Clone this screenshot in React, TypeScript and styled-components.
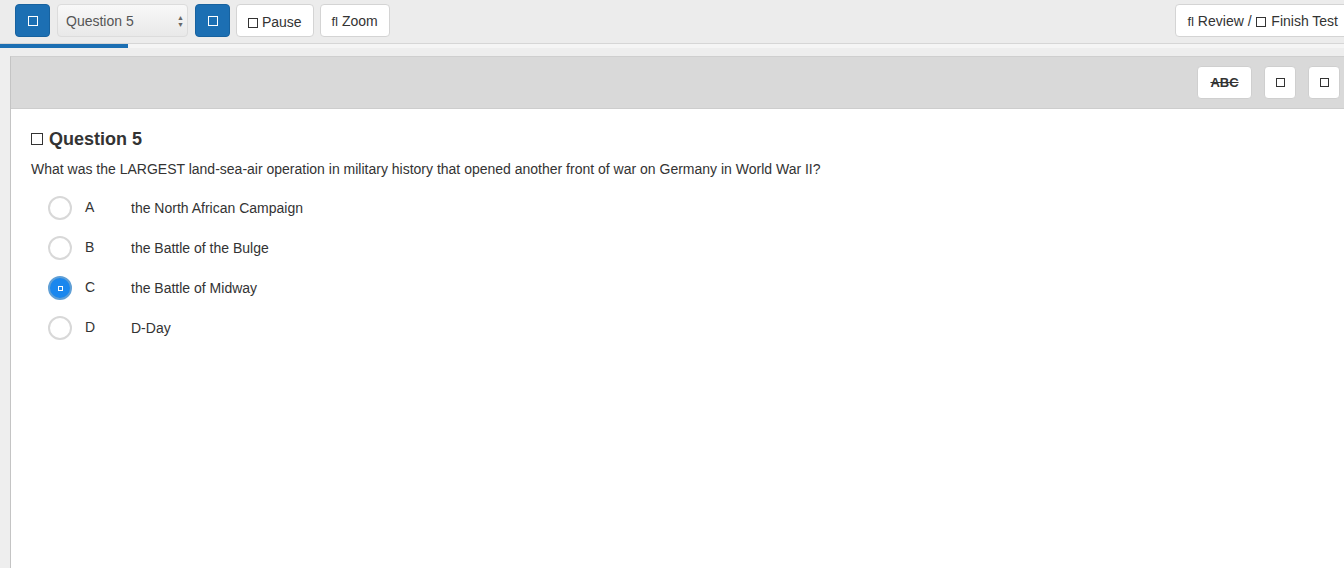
import React from 'react'
import styled, { createGlobalStyle } from 'styled-components'

const GlobalStyle = createGlobalStyle`
  html, body {
    margin: 0;
    padding: 0;
    overflow: hidden;
    background: #eeeeee;
    font-family: "Liberation Sans", Arial, Helvetica, sans-serif;
    color: #333;
  }
`

const OPTIONS = [
  { letter: 'A', text: 'the North African Campaign' },
  { letter: 'B', text: 'the Battle of the Bulge' },
  { letter: 'C', text: 'the Battle of Midway', selected: true },
  { letter: 'D', text: 'D-Day' },
]

function Box({ $size = 9, $color = '#333', $gap = 0 }: { $size?: number; $color?: string; $gap?: number }) {
  return <BoxGlyph $size={$size} $color={$color} $gap={$gap} />
}

export default function App() {
  return (
    <Page>
      <GlobalStyle />
      <TopBar>
        <ToolGroup>
          <BlueButton>
            <Box $size={10} $color="#fff" />
          </BlueButton>
          <QuestionSelect>
            <span>Question 5</span>
            <SelectArrows>
              <span>▲</span>
              <span>▼</span>
            </SelectArrows>
          </QuestionSelect>
          <BlueButton>
            <Box $size={10} $color="#fff" />
          </BlueButton>
          <ToolButton>
            <Box $size={10} /> Pause
          </ToolButton>
          <ToolButton>
            <Lig>ﬂ</Lig> Zoom
          </ToolButton>
        </ToolGroup>
        <ToolButton>
          <Lig>ﬂ</Lig> Review / <Box $size={10} $gap={1} /> Finish Test
        </ToolButton>
      </TopBar>
      <Progress>
        <ProgressFill style={{ width: 128 }} />
      </Progress>
      <Panel>
        <PanelHeader>
          <HeaderButton $wide>
            <Strike>ABC</Strike>
          </HeaderButton>
          <HeaderButton>
            <Box />
          </HeaderButton>
          <HeaderButton>
            <Box />
          </HeaderButton>
        </PanelHeader>
        <PanelBody>
          <QuestionTitle>
            <Box $size={12} /> Question 5
          </QuestionTitle>
          <QuestionText>
            What was the LARGEST land-sea-air operation in military history that opened another front of war on
            Germany in World War II?
          </QuestionText>
          <OptionList>
            {OPTIONS.map((o) => (
              <OptionRow key={o.letter}>
                <Radio $selected={!!o.selected}>{o.selected && <RadioDot />}</Radio>
                <Letter>{o.letter}</Letter>
                <OptionText>{o.text}</OptionText>
              </OptionRow>
            ))}
          </OptionList>
        </PanelBody>
      </Panel>
    </Page>
  )
}

const Page = styled.div`
  width: 1360px;
  height: 568px;
  display: flex;
  flex-direction: column;
`

const BoxGlyph = styled.span<{ $size: number; $color: string; $gap: number }>`
  display: inline-block;
  width: ${(p) => p.$size}px;
  height: ${(p) => p.$size}px;
  margin: 0 ${(p) => p.$gap}px;
  border: 1.5px solid ${(p) => p.$color};
  box-sizing: border-box;
  vertical-align: -1px;
`

const Lig = styled.span`
  font-size: 13px;
`

const TopBar = styled.div`
  height: 44px;
  box-sizing: border-box;
  padding: 4px 10px 0 15px;
  display: flex;
  justify-content: space-between;
  align-items: flex-start;
  background: #ececec;
  border-bottom: 1px solid #d6d6d6;
`

const ToolGroup = styled.div`
  display: flex;
  gap: 6px;
`

const BlueButton = styled.button`
  width: 35px;
  height: 33px;
  display: flex;
  align-items: center;
  justify-content: center;
  background: #1c6fb3;
  border: 1px solid #17629f;
  border-radius: 4px;
  padding: 0;
`

const QuestionSelect = styled.div`
  width: 131px;
  height: 33px;
  box-sizing: border-box;
  margin: 0 1px 0 1px;
  padding: 0 3px 0 8px;
  display: flex;
  align-items: center;
  justify-content: space-between;
  font-size: 14px;
  color: #555;
  border-radius: 4px;
  background: linear-gradient(#f8f8f8, #e9e9e9);
  border: 1px solid #dcdcdc;
`

const SelectArrows = styled.span`
  display: flex;
  flex-direction: column;
  font-size: 7px;
  line-height: 7px;
  color: #666;
`

const ToolButton = styled.button`
  display: block;
  height: 33px;
  padding: 2px 11px 0 11px;
  line-height: 20px;
  background: #fff;
  border: 1px solid #d4d4d4;
  border-radius: 4px;
  font-family: inherit;
  font-size: 14px;
  color: #333;
  white-space: nowrap;
`

const Progress = styled.div`
  height: 4px;
  background: #f5f5f5;
`

const ProgressFill = styled.div`
  height: 100%;
  background: #1c6fb3;
`

const Panel = styled.div`
  flex: 1;
  margin: 8px 10px 0 10px;
  display: flex;
  flex-direction: column;
  background: #fff;
  border-left: 1px solid #c4c4c4;
  border-top: 1px solid #cfcfcf;
`

const PanelHeader = styled.div`
  height: 52px;
  box-sizing: border-box;
  padding: 9px 10px 0 0;
  display: flex;
  justify-content: flex-end;
  gap: 12px;
  background: #d9d9d9;
  border-bottom: 1px solid #cdcdcd;
`

const HeaderButton = styled.button<{ $wide?: boolean }>`
  width: ${(p) => (p.$wide ? 55 : 32)}px;
  height: 33px;
  padding: 0;
  display: flex;
  align-items: center;
  justify-content: center;
  background: #fff;
  border: 1px solid #cfcfcf;
  border-radius: 4px;
  font-family: inherit;
`

const Strike = styled.span`
  font-size: 13px;
  font-weight: bold;
  color: #333;
  text-decoration: line-through;
`

const PanelBody = styled.div`
  padding: 20px 20px 0 20px;
`

const QuestionTitle = styled.div`
  font-size: 18px;
  font-weight: bold;
  line-height: 20px;
  color: #333;
  display: flex;
  align-items: center;
  gap: 6px;
`

const QuestionText = styled.div`
  margin-top: 10px;
  font-size: 14px;
  line-height: 20px;
  color: #333;
`

const OptionList = styled.div`
  margin-top: 9px;
  padding-left: 17px;
  display: flex;
  flex-direction: column;
`

const OptionRow = styled.div`
  height: 40px;
  display: flex;
  align-items: center;
  font-size: 14px;
  color: #333;
`

const Radio = styled.span<{ $selected: boolean }>`
  width: 24px;
  height: 24px;
  box-sizing: border-box;
  border-radius: 50%;
  display: flex;
  align-items: center;
  justify-content: center;
  border: 2px solid ${(p) => (p.$selected ? '#5f9fd6' : '#d8d8d8')};
  background: ${(p) => (p.$selected ? '#1a87ee' : '#fff')};
`

const RadioDot = styled.span`
  width: 5px;
  height: 5px;
  border: 1px solid #fff;
  box-sizing: border-box;
`

const Letter = styled.span`
  width: 46px;
  margin-left: 13px;
  margin-top: -2px;
`

const OptionText = styled.span``
